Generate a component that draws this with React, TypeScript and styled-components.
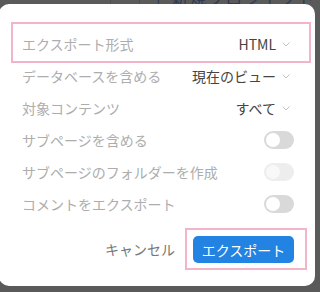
import React from "react";
import styled, { createGlobalStyle } from "styled-components";

const GlobalStyle = createGlobalStyle`
  html, body {
    margin: 0;
    padding: 0;
    background: #5a5a5a;
  }
  * {
    box-sizing: border-box;
  }
`;

const FONT = `"Noto Sans CJK JP", "Noto Sans", sans-serif`;

const Stage = styled("div")`
  width: 320px;
  height: 292px;
  overflow: hidden;
  background: #5a5a5a;
  display: flex;
  flex-direction: column;
  font-family: ${FONT};
`;

const Backdrop = styled("div")`
  height: 4px;
  display: flex;
  align-items: flex-end;
  overflow: hidden;
`;

const BackdropDivider = styled("div")<{ left: number }>`
  margin-left: ${props => props.left}px;
  width: 1px;
  height: 4px;
  background: #4e4e4e;
`;

const BackdropTitle = styled("div")`
  margin-left: 16px;
  color: #2f3c55;
  font-size: 17px;
  line-height: 12px;
  white-space: nowrap;
  letter-spacing: 1px;
`;

const Dialog = styled("div")`
  margin-left: -1px;
  width: 316px;
  background: #fff;
  border-radius: 10px;
  padding: 18px 0 16px;
  display: flex;
  flex-direction: column;
`;

const Highlight = styled("div")`
  border: 2px solid #f3b3cb;
`;

const FieldBox = styled(Highlight)`
  margin: 0 4px 0 12px;
`;

const Row = styled("div")<{ inBox?: boolean }>`
  height: ${props => (props.inBox ? 37 : 32)}px;
  display: flex;
  align-items: center;
  justify-content: space-between;
  padding: ${props => (props.inBox ? "3px 15px 0 9px" : "0 21px 0 23px")};
  font-size: 14px;
`;

const List = styled("div")`
  margin-top: -3px;
  display: flex;
  flex-direction: column;
`;

const Label = styled("span")`
  color: #adadad;
  white-space: nowrap;
`;

const Value = styled("span")`
  display: flex;
  align-items: center;
  gap: 6px;
  margin-right: 4px;
  color: #444;
  white-space: nowrap;
`;

const Toggle = styled("span")<{ disabled?: boolean }>`
  width: 30px;
  height: 18px;
  border-radius: 9px;
  padding: 2px;
  display: flex;
  align-items: center;
  background: ${props => (props.disabled ? "#ededed" : "#d9d9d9")};
`;

const Knob = styled("span")<{ disabled?: boolean }>`
  width: 14px;
  height: 14px;
  border-radius: 50%;
  background: ${props => (props.disabled ? "#f8f8f8" : "#fff")};
`;

const Footer = styled("div")`
  margin-top: 8px;
  padding-right: 8px;
  display: flex;
  justify-content: flex-end;
  align-items: center;
  gap: 10px;
`;

const CancelButton = styled("button")`
  border: none;
  background: none;
  padding: 0;
  font-family: ${FONT};
  font-size: 14px;
  color: #777;
  cursor: pointer;
`;

const ButtonBox = styled(Highlight)`
  padding: 6px 11px 5px 6px;
`;

const ExportButton = styled("button")`
  width: 101px;
  height: 27px;
  border: none;
  border-radius: 5px;
  background: #2383e2;
  color: #fff;
  font-family: ${FONT};
  font-size: 14px;
  padding: 0;
  cursor: pointer;
`;

const Chevron = () => (
  <svg width="8" height="5" viewBox="0 0 8 5" fill="none">
    <path d="M0.5 0.5 L4 4 L7.5 0.5" stroke="#c2c2c2" strokeWidth="1" />
  </svg>
);

type SelectProps = { label: string; value: string; inBox?: boolean };

const SelectRow: React.FC<SelectProps> = ({ label, value, inBox }) => (
  <Row inBox={inBox}>
    <Label>{label}</Label>
    <Value>
      {value}
      <Chevron />
    </Value>
  </Row>
);

type ToggleProps = { label: string; disabled?: boolean };

const ToggleRow: React.FC<ToggleProps> = ({ label, disabled }) => (
  <Row>
    <Label>{label}</Label>
    <Toggle disabled={disabled}>
      <Knob disabled={disabled} />
    </Toggle>
  </Row>
);

const App: React.FC = () => {
  return (
    <>
      <GlobalStyle />
      <Stage>
        <Backdrop>
          <BackdropDivider left={110} />
          <BackdropDivider left={28} />
          <BackdropTitle>|&nbsp;&nbsp;新規プロジェクト</BackdropTitle>
        </Backdrop>
        <Dialog>
          <FieldBox>
            <SelectRow inBox label="エクスポート形式" value="HTML" />
          </FieldBox>
          <List>
            <SelectRow label="データベースを含める" value="現在のビュー" />
            <SelectRow label="対象コンテンツ" value="すべて" />
            <ToggleRow label="サブページを含める" />
            <ToggleRow label="サブページのフォルダーを作成" disabled />
            <ToggleRow label="コメントをエクスポート" />
          </List>
          <Footer>
            <CancelButton>キャンセル</CancelButton>
            <ButtonBox>
              <ExportButton>エクスポート</ExportButton>
            </ButtonBox>
          </Footer>
        </Dialog>
      </Stage>
    </>
  );
};

export default App;
